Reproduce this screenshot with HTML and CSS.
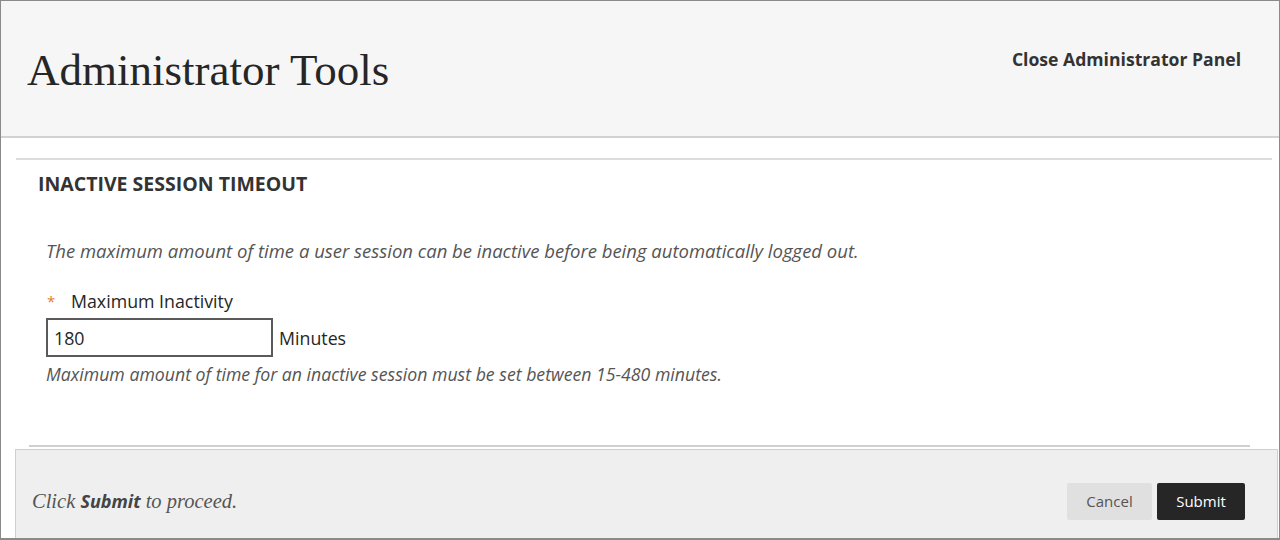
FILE: index.html
```html
<!DOCTYPE html>
<html lang="en">
<head>
<meta charset="utf-8">
<title>Administrator Tools</title>
<link rel="stylesheet" href="styles.css">
</head>
<body>
<div class="frame">
  <header class="header">
    <h1 class="title">Administrator Tools</h1>
    <a class="close-link" href="#">Close Administrator Panel</a>
  </header>
  <section class="section">
    <h2 class="section-title">INACTIVE SESSION TIMEOUT</h2>
    <p class="description">The maximum amount of time a user session can be inactive before being automatically logged out.</p>
    <div class="field">
      <label class="field-label"><span class="req">*</span>Maximum Inactivity</label>
      <div class="field-row">
        <input class="text-input" type="text" value="180">
        <span class="unit">Minutes</span>
      </div>
      <p class="hint">Maximum amount of time for an inactive session must be set between 15-480 minutes.</p>
    </div>
  </section>
  <div class="separator"></div>
  <footer class="footer">
    <p class="proceed">Click <strong>Submit</strong> to proceed.</p>
    <div class="actions">
      <button class="btn btn-cancel">Cancel</button>
      <button class="btn btn-submit">Submit</button>
    </div>
  </footer>
</div>
</body>
</html>
```
FILE: styles.css
```css
* { box-sizing: border-box; }
html, body { margin: 0; padding: 0; background: #fff; }
body { font-family: "Open Sans", "Liberation Sans", sans-serif; color: #262626; }

.frame {
  width: 1280px;
  height: 540px;
  border: 1px solid #8a8a8a;
  border-bottom-width: 2px;
  display: flex;
  flex-direction: column;
  overflow: hidden;
}

.header {
  height: 137px;
  flex: none;
  background: #f6f6f6;
  border-bottom: 2px solid #d2d2d2;
  display: flex;
  justify-content: space-between;
  align-items: flex-start;
  padding: 0 38px 0 26px;
}
.title {
  margin: 44px 0 0;
  font-family: "Liberation Serif", serif;
  font-weight: normal;
  font-size: 45px;
  line-height: 50px;
  color: #262626;
}
.close-link {
  margin-top: 46px;
  font-size: 17.6px;
  font-weight: 700;
  line-height: 24px;
  color: #333;
  text-decoration: none;
}

.section {
  margin: 20px 7px 0 15px;
  border-top: 2px solid #dcdcdc;
  padding: 12px 0 0 22px;
  flex: 1;
}
.section-title {
  margin: 0;
  font-size: 19.5px;
  font-weight: 700;
  line-height: 24px;
  color: #333;
}
.description {
  margin: 43px 0 0 8px;
  font-style: italic;
  font-size: 18.5px;
  line-height: 24px;
  color: #555;
}
.field { margin: 26px 0 0 8px; }
.field-label {
  display: flex;
  align-items: center;
  font-size: 17.8px;
  line-height: 24px;
  color: #262626;
}
.req {
  color: #d9822b;
  font-size: 15px;
  width: 25px;
  padding-left: 1px;
}
.field-row {
  display: flex;
  align-items: center;
  margin-top: 5px;
}
.text-input {
  width: 227px;
  height: 39px;
  border: 2px solid #5a5a5a;
  padding: 0 6px;
  font-family: "Open Sans", "Liberation Sans", sans-serif;
  font-size: 17.8px;
  color: #262626;
  background: #fff;
  outline: none;
}
.unit {
  margin-left: 6px;
  font-size: 17.8px;
  color: #262626;
}
.hint {
  margin: 5px 0 0;
  font-style: italic;
  font-size: 17.7px;
  line-height: 24px;
  color: #555;
}

.separator {
  flex: none;
  margin: 0 29px 0 28px;
  border-top: 2px solid #d0d0d0;
}
.footer {
  flex: none;
  height: 89px;
  margin: 2px 1px 0 14px;
  background: #efefef;
  border: 1px solid #cfcfcf;
  border-bottom: none;
  display: flex;
  align-items: center;
  justify-content: space-between;
  padding: 0 32px 0 16px;
}
.proceed {
  margin: 14px 0 0;
  font-family: "Liberation Serif", serif;
  font-style: italic;
  font-size: 20.5px;
  color: #555;
}
.proceed strong {
  font-family: "Open Sans", "Liberation Sans", sans-serif;
  font-weight: 700;
  font-size: 18px;
  color: #444;
}
.actions {
  display: flex;
  gap: 5px;
  margin-top: 14px;
}
.btn {
  height: 37px;
  border: none;
  border-radius: 2px;
  font-family: "Open Sans", "Liberation Sans", sans-serif;
  font-size: 15px;
  padding: 0;
}
.btn-cancel {
  width: 85px;
  background: #e0e0e0;
  color: #555;
}
.btn-submit {
  width: 88px;
  background: #262626;
  color: #fff;
}
```
